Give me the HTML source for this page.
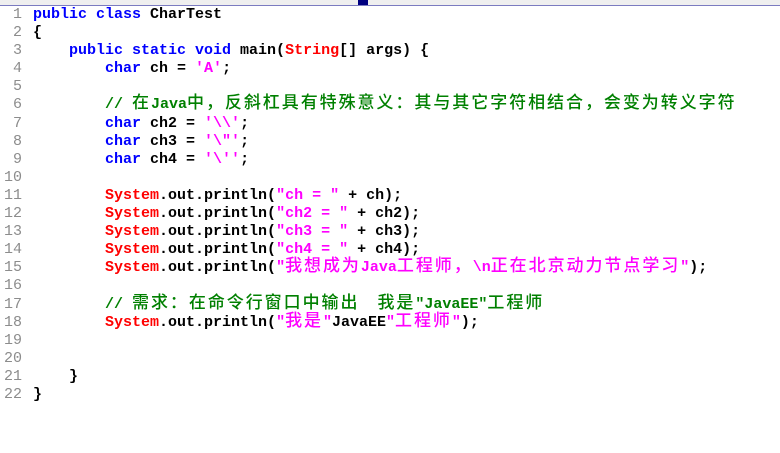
<!DOCTYPE html>
<html><head><meta charset="utf-8"><style>
body{margin:0;width:780px;height:453px;background:#fff;overflow:hidden;position:relative}
.ruler{position:absolute;left:0;top:0;width:780px;height:5px;background:#efefef;border-bottom:1px solid #7b7bc0}
.blk{position:absolute;left:358px;top:0;width:10px;height:5px;background:#000080}
.code{position:absolute;left:0;top:6px;font:bold 15px/18.1px "Liberation Mono","Noto Sans CJK SC",monospace;white-space:pre;color:#000}
.n{display:inline-block;width:22px;text-align:right;color:#8c8c8c;font-weight:normal;margin-right:11px}
.k{color:#0000ff}.s{color:#ff00ff}.r{color:#ff0000}.c{color:#008000}
i{font-style:normal;font-weight:500;letter-spacing:1.95px;font-size:17px;line-height:10px}
</style></head><body>
<div class="ruler"></div><div class="blk"></div>
<div class="code"><span class="n">1</span><span class="k">public class</span> CharTest
<span class="n">2</span>{
<span class="n">3</span>    <span class="k">public static void</span> main(<span class="r">String</span>[] args) {
<span class="n">4</span>        <span class="k">char</span> ch = <span class="s">'A'</span>;
<span class="n">5</span>
<span class="n">6</span>        <span class="c">// <i>在</i>Java<i>中，反斜杠具有特殊意义：其与其它字符相结合，会变为转义字符</i></span>
<span class="n">7</span>        <span class="k">char</span> ch2 = <span class="s">'\\'</span>;
<span class="n">8</span>        <span class="k">char</span> ch3 = <span class="s">'\"'</span>;
<span class="n">9</span>        <span class="k">char</span> ch4 = <span class="s">'\''</span>;
<span class="n">10</span>
<span class="n">11</span>        <span class="r">System</span>.out.println(<span class="s">"ch = "</span> + ch);
<span class="n">12</span>        <span class="r">System</span>.out.println(<span class="s">"ch2 = "</span> + ch2);
<span class="n">13</span>        <span class="r">System</span>.out.println(<span class="s">"ch3 = "</span> + ch3);
<span class="n">14</span>        <span class="r">System</span>.out.println(<span class="s">"ch4 = "</span> + ch4);
<span class="n">15</span>        <span class="r">System</span>.out.println(<span class="s">"<i>我想成为</i>Java<i>工程师，</i>\n<i>正在北京动力节点学习</i>"</span>);
<span class="n">16</span>
<span class="n">17</span>        <span class="c">// <i>需求：在命令行窗口中输出</i>  <i>我是</i>"JavaEE"<i>工程师</i></span>
<span class="n">18</span>        <span class="r">System</span>.out.println(<span class="s">"<i>我是</i>"</span>JavaEE<span class="s">"<i>工程师</i>"</span>);
<span class="n">19</span>
<span class="n">20</span>
<span class="n">21</span>    }
<span class="n">22</span>}</div>
</body></html>
